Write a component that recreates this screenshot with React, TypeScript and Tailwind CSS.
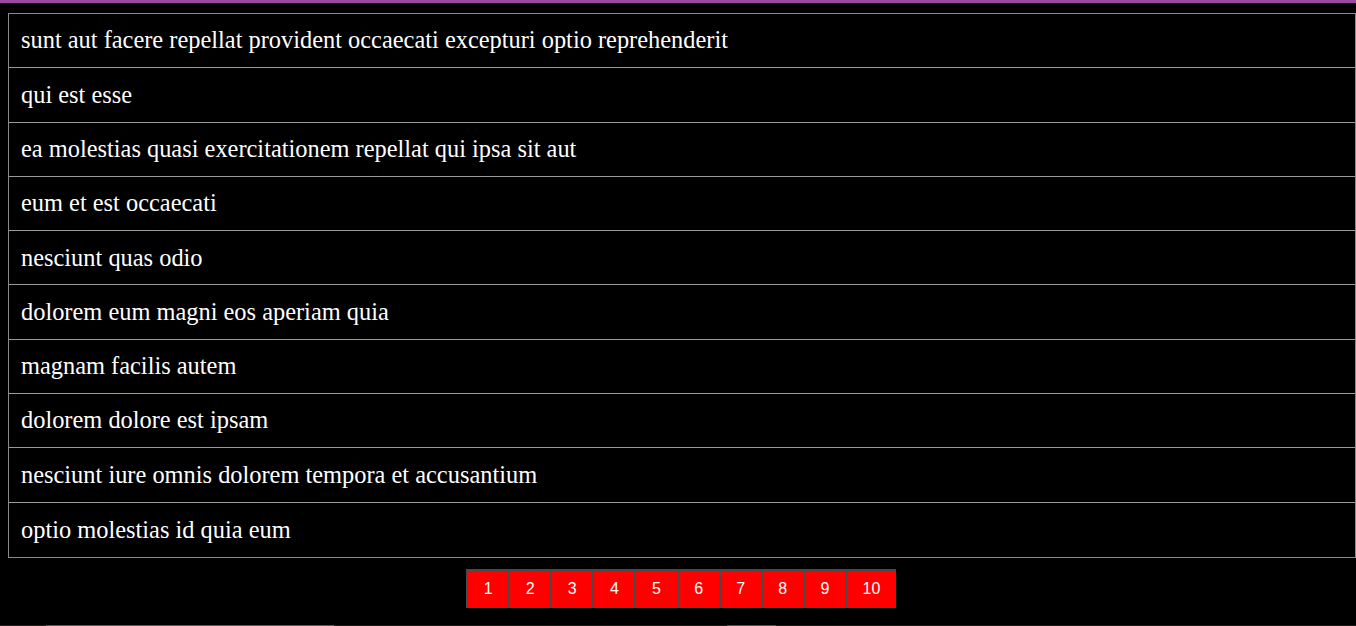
import React from 'react';

const titles = [
  'sunt aut facere repellat provident occaecati excepturi optio reprehenderit',
  'qui est esse',
  'ea molestias quasi exercitationem repellat qui ipsa sit aut',
  'eum et est occaecati',
  'nesciunt quas odio',
  'dolorem eum magni eos aperiam quia',
  'magnam facilis autem',
  'dolorem dolore est ipsam',
  'nesciunt iure omnis dolorem tempora et accusantium',
  'optio molestias id quia eum',
];

export default function App() {
  return (
    <div className="min-h-[626px] bg-black overflow-hidden">
      <div className="h-[3px] bg-[#9c47a0]" />
      <div className="pt-[10px] pl-[8px]">
        <ul className="border border-[#8a8a8a]">
          {titles.map((t, i) => (
            <li
              key={i}
              className={`h-[54.3px] flex items-center px-3 text-[24.4px] text-white font-['Liberation_Serif',serif] ${
                i < titles.length - 1 ? 'border-b border-[#9a9a9a]' : ''
              }`}
            >
              {t}
            </li>
          ))}
        </ul>
      </div>
      {/* pagination */}
      <div className="flex justify-center pl-[6px] mt-[11px]">
        {Array.from({ length: 10 }, (_, i) => (
          <button
            key={i}
            className="h-[39px] px-[15.6px] bg-[#ff0000] text-white text-[16px] font-['Liberation_Sans',Arial,sans-serif] border-t-2 border-l-2 border-[#4a4a4a]"
          >
            {i + 1}
          </button>
        ))}
      </div>
      <div className="mt-[17px] flex h-px">
        <div className="w-[46px] bg-[#22221a]" />
        <div className="w-[288px] bg-[#5a5a5a]" />
        <div className="w-[393px] bg-[#1a1a14]" />
        <div className="w-[49px] bg-[#4e4e48]" />
        <div className="flex-1 bg-[#1a1a14]" />
      </div>
    </div>
  );
}
